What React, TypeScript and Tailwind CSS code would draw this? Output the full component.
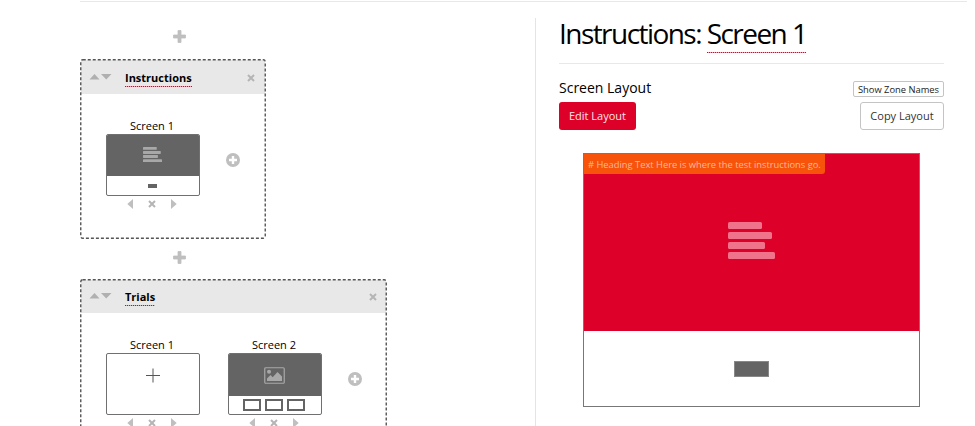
import React from "react";

const Plus = () => (
  <svg width="13" height="13" viewBox="0 0 13 13" className="block">
    <path d="M5 .5h3V5h4.500v3H8v4.500H5V8H.5V5H5z" fill="#bfbfbf" stroke="#bfbfbf" strokeWidth=".8" strokeLinejoin="round" />
  </svg>
);

const Cross = () => (
  <svg width="8" height="8" viewBox="0 0 8 8" className="block">
    <path d="M1 1l6 6M7 1l-6 6" stroke="#b5b5b5" strokeWidth="2" />
  </svg>
);

const AddCircle = () => (
  <svg width="14" height="14" viewBox="0 0 14 14" className="block">
    <circle cx="7" cy="7" r="7" fill="#bfbfbf" />
    <path d="M7 3v8M3 7h8" stroke="#fff" strokeWidth="2.400" />
  </svg>
);

const Lines = ({ className, fill }: { className: string; fill: string }) => (
  <svg viewBox="0 0 47 37" className={className} fill={fill} preserveAspectRatio="none">
    <rect y="0" width="34" height="7" rx="1.500" />
    <rect y="10" width="44" height="7" rx="1.500" />
    <rect y="20" width="37" height="7" rx="1.500" />
    <rect y="30" width="47" height="7" rx="1.500" />
  </svg>
);

const Controls = () => (
  <div className="mt-[4px] flex h-[8px] items-center justify-center gap-[15px] pr-[2px]">
    <svg width="6" height="10" viewBox="0 0 6 10" className="shrink-0"><path d="M6 0v10L.3 5z" fill="#bfbfbf" /></svg>
    <Cross />
    <svg width="6" height="10" viewBox="0 0 6 10" className="shrink-0"><path d="M0 0v10l5.700-5z" fill="#bfbfbf" /></svg>
  </div>
);

const Dots = () => (
  <span className="block h-px bg-[repeating-linear-gradient(90deg,#dd0028_0px,#dd0028_1px,#f4a3b3_1px,#f4a3b3_2px)]" />
);

function Screen({ name, children }: { name: string; children: React.ReactNode }) {
  return (
    <div className="w-[94px]">
      <div className="h-[16px] whitespace-nowrap pr-[2px] text-center text-[11px] leading-[15px] text-black">{name}</div>
      <div className="flex h-[62px] flex-col overflow-hidden rounded-[2px] border border-[#707070]">{children}</div>
      <Controls />
    </div>
  );
}

function Block({ title, className, headerClass, children }: { title: string; className: string; headerClass: string; children: React.ReactNode }) {
  return (
    <section className={"relative px-px pt-px " + className}>
      <header className={"flex items-center bg-[#e8e8e8] pl-[8px] " + headerClass}>
        <svg width="24" height="8" viewBox="0 0 24 8" className="mb-[1px] mr-[12px]">
          <path d="M.5 6.500L5.500 1l5 5.500zM12 1h10.500L17.250 6.500z" fill="#b0b0b0" />
        </svg>
        <span className="mt-[2px] h-[17px] text-[11px] font-bold leading-[16px] text-black">{title}<Dots /></span>
        <span className="ml-auto mt-[1px]"><Cross /></span>
      </header>
      <div className="flex pl-[25px] pt-[24px]">{children}</div>
      <svg className="pointer-events-none absolute left-0 top-0 h-full w-full overflow-visible">
        <rect x=".75" y=".75" rx="2" fill="none" stroke="#555" strokeWidth="1.400" strokeDasharray="3 2" className="[height:calc(100%-1.5px)] [width:calc(100%-1.5px)]" />
      </svg>
    </section>
  );
}

export default function App() {
  return (
    <div className="h-[426px] w-[975px] overflow-hidden bg-white pl-[80px] pt-px font-['Open_Sans','Noto_Sans',sans-serif] text-black">
      <div className="h-px w-[887px] bg-[#e8e8e8]" />
      <div className="flex">
        <main className="w-[455px] pt-[28px]">
          <div className="pl-[93px]"><Plus /></div>
          <Block title="Instructions" className="mt-[16px] h-[180px] w-[186px]" headerClass="h-[34px] pr-[10px]">
            <Screen name="Screen 1">
              <div className="flex h-[41px] items-center justify-center bg-[#646464] pb-[2px] pr-[1px]">
                <Lines className="h-[15px] w-[19px]" fill="#a8a8a8" />
              </div>
              <div className="flex flex-1 items-center justify-center pr-px"><div className="h-[4px] w-[9px] bg-[#646464]" /></div>
            </Screen>
            <div className="ml-[26px] mt-[35px]"><AddCircle /></div>
          </Block>
          <div className="mt-[12px] pl-[93px]"><Plus /></div>
          <Block title="Trials" className="mt-[15px] h-[180px] w-[307px]" headerClass="h-[33px] pr-[9px]">
            <Screen name="Screen 1">
              <svg width="15" height="15" viewBox="0 0 15 15" className="mx-auto mt-[14px] block"><path d="M7 .5v14M0 7.500h14" stroke="#555" /></svg>
            </Screen>
            <div className="ml-[28px]">
              <Screen name="Screen 2">
                <div className="flex h-[42px] items-center justify-center bg-[#646464] pr-px">
                  <svg width="21" height="17" viewBox="0 0 21 17">
                    <rect x=".75" y=".75" width="19.500" height="15.500" rx="1" fill="none" stroke="#a8a8a8" strokeWidth="1.200" />
                    <circle cx="5" cy="4.800" r="2" fill="#a8a8a8" />
                    <path d="M3 14v-2.500L6.500 8l2.200 2.200L13.500 5l4.500 4.500V14z" fill="#a8a8a8" />
                  </svg>
                </div>
                <div className="flex flex-1 items-center justify-center gap-[4px] pr-[2px]">
                  <div className="h-[12px] w-[18px] border-2 border-[#646464]" />
                  <div className="h-[12px] w-[18px] border-2 border-[#646464]" />
                  <div className="h-[12px] w-[18px] border-2 border-[#646464]" />
                </div>
              </Screen>
            </div>
            <div className="ml-[26px] mt-[35px]"><AddCircle /></div>
          </Block>
        </main>
        <aside className="mt-[16px] h-[410px] w-[409px] border-l border-[#e4e4e4] pl-[23px]">
          <h1 className="flex h-[46px] whitespace-pre border-b border-[#e8e8e8] text-[28px] leading-[31px] tracking-[-1.550px]">
            <span>Instructions: </span>
            <span className="flex h-[35px] flex-col justify-between">Screen 1<Dots /></span>
          </h1>
          <div className="flex justify-between pt-[15px]">
            <div>
              <h2 className="h-[23px] text-[14px] leading-[18px]">Screen Layout</h2>
              <button className="block h-[28px] w-[77px] rounded-[3px] bg-[#dd0028] text-[11px] text-[#ffe3e8]">Edit Layout</button>
            </div>
            <div className="flex flex-col items-end pt-[2px]">
              <button className="h-[16px] w-[91px] whitespace-nowrap rounded-[2px] border border-[#c4c4c4] text-[9.350px] leading-[13px] text-[#222]">Show Zone Names</button>
              <button className="mt-[5px] h-[28px] w-[84px] whitespace-nowrap rounded-[3px] border border-[#c4c4c4] text-[11px] text-[#333]">Copy Layout</button>
            </div>
          </div>
          <div className="ml-[24px] mt-[23px] h-[254px] w-[337px] border border-[#777]">
            <div className="relative flex h-[177px] items-center justify-center bg-[#dd0028] pb-[4px] pr-px">
              <div className="absolute left-0 top-0 h-[20px] w-[241px] whitespace-nowrap rounded-br-[3px] bg-[#f7530b] pl-[4px] text-[9.330px] leading-[21px] text-[#ffb79c]"># Heading Text Here is where the test instructions go.</div>
              <Lines className="h-[37px] w-[47px]" fill="#ef738b" />
            </div>
            <div className="flex h-[75px] items-center justify-center pr-px"><div className="h-[16px] w-[35px] border border-[#888] bg-[#646464]" /></div>
          </div>
        </aside>
      </div>
    </div>
  );
}
